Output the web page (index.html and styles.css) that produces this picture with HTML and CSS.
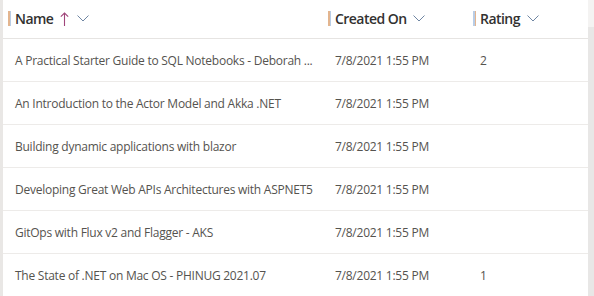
FILE: index.html
```html
<!DOCTYPE html>
<html>
<head>
<meta charset="utf-8">
<link rel="stylesheet" href="styles.css">
</head>
<body>
<div class="frame">
  <div class="edge"></div>
  <div class="list">
    <div class="row head">
      <div class="hcell c1">
        <span class="marker"><i class="m-a"></i><i class="m-b"></i></span>
        <span class="htext">Name</span>
        <svg class="sort" width="9" height="14" viewBox="0 0 9 14"><path d="M4.5 1 V14 M0.8 4.7 L4.5 1 L8.2 4.7" fill="none" stroke="#a0457a" stroke-width="1.1"/></svg>
        <svg class="chev" width="12" height="7" viewBox="0 0 12 7"><path d="M0.5 0.5 L6 6 L11.5 0.5" fill="none" stroke="#6f86a3" stroke-width="1"/></svg>
      </div>
      <div class="hcell c2">
        <span class="marker"><i class="m-a"></i><i class="m-b"></i></span>
        <span class="htext">Created On</span>
        <svg class="chev" width="12" height="7" viewBox="0 0 12 7"><path d="M0.5 0.5 L6 6 L11.5 0.5" fill="none" stroke="#6f86a3" stroke-width="1"/></svg>
      </div>
      <div class="hcell c3">
        <span class="marker"><i class="m-b"></i><i class="m-a"></i></span>
        <span class="htext">Rating</span>
        <svg class="chev" width="12" height="7" viewBox="0 0 12 7"><path d="M0.5 0.5 L6 6 L11.5 0.5" fill="none" stroke="#6f86a3" stroke-width="1"/></svg>
      </div>
    </div>
    <div class="row">
      <div class="cell c1">A Practical Starter Guide to SQL Notebooks - Deborah ...</div>
      <div class="cell c2">7/8/2021 1:55 PM</div>
      <div class="cell c3">2</div>
    </div>
    <div class="row">
      <div class="cell c1">An Introduction to the Actor Model and Akka .NET</div>
      <div class="cell c2">7/8/2021 1:55 PM</div>
      <div class="cell c3"></div>
    </div>
    <div class="row">
      <div class="cell c1">Building dynamic applications with blazor</div>
      <div class="cell c2">7/8/2021 1:55 PM</div>
      <div class="cell c3"></div>
    </div>
    <div class="row">
      <div class="cell c1">Developing Great Web APIs Architectures with ASPNET5</div>
      <div class="cell c2">7/8/2021 1:55 PM</div>
      <div class="cell c3"></div>
    </div>
    <div class="row">
      <div class="cell c1">GitOps with Flux v2 and Flagger - AKS</div>
      <div class="cell c2">7/8/2021 1:55 PM</div>
      <div class="cell c3"></div>
    </div>
    <div class="row">
      <div class="cell c1">The State of .NET on Mac OS - PHINUG 2021.07</div>
      <div class="cell c2">7/8/2021 1:55 PM</div>
      <div class="cell c3">1</div>
    </div>
  </div>
  <div class="scroll"><div class="track-top"></div><div class="thumb"></div></div>
</div>
</body>
</html>
```
FILE: styles.css
```css
* { box-sizing: border-box; }
html, body { margin: 0; padding: 0; background: #fff; }
body { font-family: "Open Sans", "Noto Sans", sans-serif; width: 594px; height: 296px; overflow: hidden; }
.frame { display: flex; height: 296px; }
.edge { width: 3px; background: #e9e7e5; flex: none; }
.list { flex: 1; display: flex; flex-direction: column; overflow: hidden; }
.scroll { width: 6px; flex: none; display: flex; flex-direction: column; }
.track-top { height: 27px; background: #f4f3f2; }
.thumb { flex: 1; background: #e8e7e6; }
.row { display: grid; grid-template-columns: 320px 145px 1fr; height: 43px; border-bottom: 1px solid #edebe9; flex: none; }
.row.head { height: 39px; border-bottom: 1px solid #e6e4e2; }
.hcell { display: flex; align-items: center; padding-left: 5px; padding-bottom: 2px; }
.marker { display: flex; height: 15px; margin-right: 4px; }
.marker i { display: block; width: 1.5px; height: 15px; }
.m-a { background: #e3b58f; }
.m-b { background: #b9cde6; }
.htext { font-size: 14px; font-weight: 600; color: #323130; letter-spacing: -0.55px; }
.sort { margin-left: 7px; margin-top: 1px; }
.chev { margin-left: 8px; margin-top: 1px; }
.c2 .chev, .c3 .chev { margin-left: 7px; }
.cell { display: flex; align-items: center; padding-left: 12px; font-size: 12px; color: #55534f; white-space: nowrap; overflow: hidden; letter-spacing: -0.25px; }
```
